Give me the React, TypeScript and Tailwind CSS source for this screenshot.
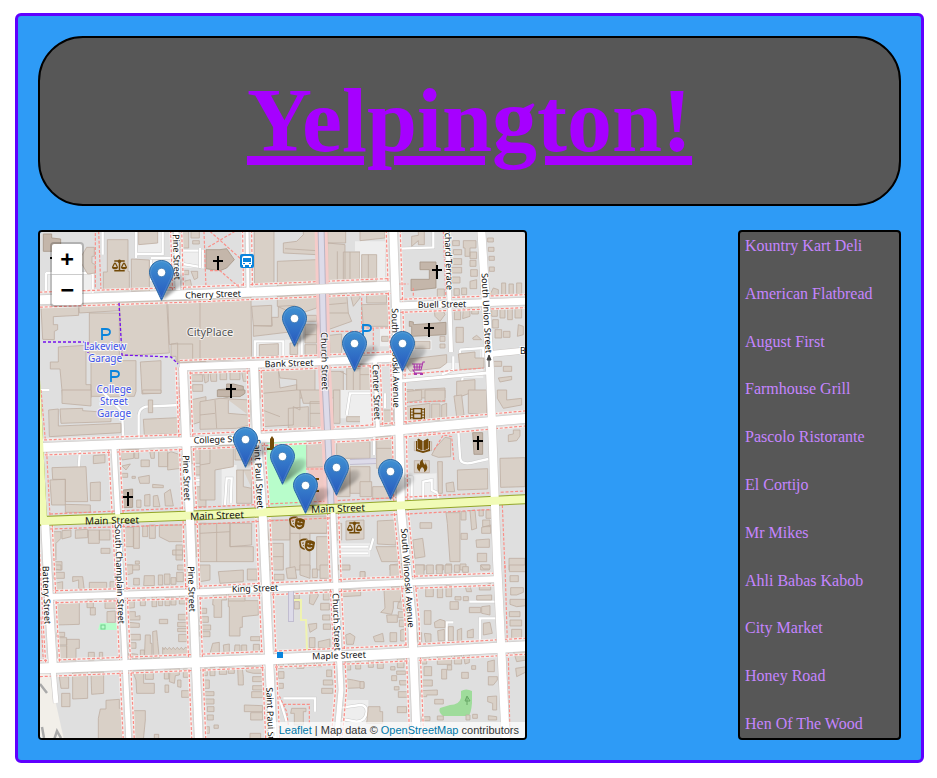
import type { ReactNode } from "react";
import { FaBalanceScale, FaFilm, FaTheaterMasks } from "react-icons/fa";

const restaurants = [
  "Kountry Kart Deli",
  "American Flatbread",
  "August First",
  "Farmhouse Grill",
  "Pascolo Ristorante",
  "El Cortijo",
  "Mr Mikes",
  "Ahli Babas Kabob",
  "City Market",
  "Honey Road",
  "Hen Of The Wood",
];

// Tip of each pin, in map units.
const pins: [number, number][] = [
  [161, 300],
  [294, 346],
  [354, 371],
  [402, 371],
  [245, 467],
  [282, 484],
  [336, 495],
  [390, 499],
  [305, 513],
];

type Point = [number, number];
interface Street {
  points: Point[];
  width: number;
  walk?: boolean;
}

const streets: Street[] = [
  { points: [[30, 300], [206, 294], [390, 286]], width: 9, walk: true },
  { points: [[180, 367], [290, 363], [398, 358]], width: 7, walk: true },
  { points: [[395, 306], [530, 301]], width: 7, walk: true },
  { points: [[490, 354], [530, 350]], width: 6 },
  { points: [[400, 381], [487, 373]], width: 3 },
  { points: [[30, 448], [206, 441], [365, 433], [530, 418]], width: 9, walk: true },
  { points: [[46, 597], [206, 592], [370, 584], [500, 579]], width: 6, walk: true },
  { points: [[30, 669], [206, 662], [370, 655], [530, 646]], width: 10, walk: true },
  { points: [[45, 520], [50, 620], [53, 668]], width: 8, walk: true },
  { points: [[53, 668], [56, 703]], width: 5 },
  { points: [[114, 448], [118, 520], [124, 640], [129, 745]], width: 5, walk: true },
  { points: [[176, 225], [178, 290]], width: 5, walk: true },
  { points: [[183, 367], [186, 440], [190, 520], [199, 745]], width: 8, walk: true },
  { points: [[247, 225], [248, 290]], width: 3, walk: true },
  { points: [[254, 366], [257, 440], [263, 520], [273, 745]], width: 8, walk: true },
  { points: [[333, 512], [336, 590], [341, 690], [336, 745]], width: 5, walk: true },
  { points: [[375, 360], [378, 432]], width: 4, walk: true },
  { points: [[393, 225], [398, 370], [401, 510], [412, 620], [417, 745]], width: 8, walk: true },
  { points: [[447, 225], [451, 352]], width: 4 },
  { points: [[481, 225], [490, 370], [497, 560], [506, 745]], width: 8 },
];

function toPath(points: Point[]) {
  return "M" + points.map((p) => p.join(" ")).join("L");
}

// Shifts a polyline sideways, for the pavements on both sides of a street.
function offset(points: Point[], distance: number): Point[] {
  return points.map((p, i) => {
    const a = points[Math.max(0, i - 1)];
    const b = points[Math.min(points.length - 1, i + 1)];
    const length = Math.hypot(b[0] - a[0], b[1] - a[1]);
    return [p[0] - ((b[1] - a[1]) / length) * distance, p[1] + ((b[0] - a[0]) / length) * distance];
  });
}

interface Block {
  x: number;
  y: number;
  houses: string;
  landmarks?: string;
  lots?: string;
  lanes?: string;
  walks?: string;
}

// City blocks; the coordinates inside a block are thirds of a map unit.
const blocks: Block[] = [
  {
    x: 36,
    y: 228,
    lots: "M25 135H170V195H25ZM305 10H380V75H305ZM345 90H410V160H345ZM438 68H500V120H438Z",
    lanes: "M30 135V190M30 135H170V195M200 10V80M300 10V90M300 78H380V10M345 95V160M345 90H410M438 68H500V118L440 108Z",
    landmarks: "M22 18H47V30L74 33V70H22Z",
    houses:
      "M214 35H276V130H280V188H202V132H214ZM286 93L340 96V190H286ZM152 58H175V85H168V105L178 110V135L155 138L130 95ZM308 10H365V45L308 50ZM435 10H458V60H435ZM465 10H490V30H465ZM470 38H490V48H470ZM443 127H458V140H443ZM465 130H485V150L475 155ZM443 160L463 155L468 180H443ZM15 235L127 232L128 262L52 266V290H65V305L55 310V335L20 334ZM128 225L250 220V248L130 255ZM160 255H250V395H160ZM250 222L392 217L400 375L258 383ZM395 217H510V400L425 405V345L400 350ZM405 348H470V400H420V385H405ZM67 357L150 352V470H165V510H80L72 423H43V402H67ZM165 398H300V490L295 505H165ZM313 402L375 398V495L318 498ZM465 440H500V460H465ZM470 470H500V490H470Z",
    walks: "M188 10L195 190M178 15V180M430 420V510",
  },
  {
    x: 200,
    y: 228,
    lots: "M163 335H310V392H163ZM465 40H510V70H465Z",
    lanes: "M165 390V340H250V385M305 310V385M0 60V120",
    landmarks: "M18 65L60 65L80 62L103 95L80 120L60 128L18 122ZM55 485L80 483V468H100L130 475V500L80 508L55 503Z",
    houses:
      "M163 10H222V168H163V85ZM232 100L350 95V170L232 175ZM250 45L290 40L310 20V10H350V80L250 75ZM255 62L350 68M383 10H437V45H383ZM383 45L435 50V160H383ZM430 72H480V158H430ZM450 72V158M485 70H510V150H485ZM412 70V155M0 212L153 207L155 392L0 400ZM155 235L215 232V295L160 293ZM215 268H235V235L285 232V310L160 325V293H217ZM232 205L350 198V240L290 260L232 235ZM310 262H350V280H310ZM315 290H350V345H315ZM315 320H350M315 350H350V380H315ZM178 350L235 347V382L178 387ZM270 345H293V380H270ZM383 200L440 195L445 255L455 280L385 305ZM383 230L440 225M385 255H445M450 195L480 193V210L460 235ZM388 322L425 318V375L390 380ZM10 430H25V460L15 465ZM30 435H50V460H33ZM60 432H80V455H60ZM90 430H120V455H90ZM125 430H145V460H130ZM180 430L235 425L240 480L290 470V510H180ZM235 425L345 420V510H290V455L240 450ZM390 430H430V510H390ZM440 420H510V510H440ZM420 430L440 440M460 430V500",
    walks: "M30 10L125 95M105 10L20 60M30 128H60L120 180M485 195V310M380 310H485M12 10L18 180",
  },
  {
    x: 360,
    y: 228,
    lots: "M0 40H75V165H0ZM60 300H90V355H60ZM155 335H215V365H155ZM130 405H370V450H130ZM360 355H375V395H360Z",
    lanes: "M120 62L220 58V10M300 365L370 360V400M300 365V375M245 440L280 425V385M300 490L308 450",
    landmarks: "M180 102H228V180L153 188V154H208V125H180ZM148 280L160 282V290L258 283V320L155 325V295H148Z",
    houses:
      "M0 10H75V30L0 38ZM5 80H50V160H5ZM25 80V160M155 25L175 22V10H193V50H175V38L155 55ZM278 38H298V53H278ZM280 65H305V80H280ZM277 92H305V110H275ZM275 118H305V135H275ZM275 147H300V165H275ZM282 182H298V202H282ZM305 180H320V200H305ZM232 183H253V210H232ZM310 38H348V60H330V85H315V60H310ZM330 72H350V92H330ZM330 97H348V115H330ZM332 125H352V145H332ZM330 160L350 155V182H330ZM383 30H400V42H383ZM385 58H402V70H385ZM387 85H403V97H387ZM388 117H403V130H388ZM390 200L400 180L415 185V200ZM425 165H437V200H425ZM447 168H460V200H447ZM470 165H485V198H470ZM20 195H80V225H20ZM5 230L85 228V295H10ZM223 250L250 248L255 260L240 280L225 265ZM283 250H302V275H283ZM310 240L330 235V265L308 272ZM335 235H355V258H335ZM288 298H310V343H288ZM338 330L350 322L365 335H340ZM395 245H412V265H395ZM420 240H435V270H420ZM443 240H457V275H443ZM465 242H485V270H465ZM398 275H415V300H398ZM405 305H425V330H405ZM430 310H450V328H430ZM475 290L490 295V320L472 325ZM165 340H210V362H165ZM65 325H85V340H65ZM240 325H255V340H240ZM240 348H255V360H240ZM130 395L260 380V405L240 420L150 430ZM295 378L345 372V390H372V420L300 425ZM165 485L255 480V510H165ZM290 460L345 455V490L290 510ZM388 400H425V415H388ZM388 430H400V440H388ZM415 450L455 445V455L420 462ZM430 415H455V430H430ZM0 410H35V510H0ZM0 440H35M135 485H160V510H135Z",
    walks: "M115 168H145M160 180V210M5 300H85M40 300V370M130 440L370 420M250 10L258 210",
  },
  {
    x: 36,
    y: 390,
    lots: "M455 260H510V290H455Z",
    lanes: "M258 60L262 150M308 145V75Q310 55 330 50L435 45M132 180L128 235M10 0H40M475 270H510M195 0L258 65",
    landmarks: "M262 300L290 297V352L262 353Z",
    houses:
      "M78 0H165V48L78 40ZM72 57L140 55V62L225 68V95L75 100ZM38 60L67 57V108L255 100V128L40 140ZM322 88L425 83V130L325 135ZM320 0H375V10H320ZM337 30H350V68H337ZM172 197L207 194V218L172 221ZM48 233L150 230L155 335H88V268H50ZM42 270L88 268V345H47ZM88 343L163 345V367H88ZM163 278L193 276V332H163ZM250 180L293 178V205L258 210ZM296 178H308V205H296ZM340 178H355V205H345ZM368 178H395V230H368ZM405 185L435 195V235L395 240V190ZM315 210H340V230H315ZM258 228L283 222L270 240ZM258 250H275V262H258ZM288 259H298V265H288ZM307 262L340 256V280H312ZM350 283L382 286V293H350ZM302 330H315V352H302ZM326 315L342 313V348H326ZM352 318L365 316L372 350H352ZM385 310L403 298L412 348H388ZM52 425H75V445L60 460V510H52ZM78 422L105 420V440L78 447ZM118 420L155 418V443L118 445ZM157 420H190V460H157ZM190 420H222V450H190ZM195 475H222V490H195ZM52 515H78V540H52ZM262 412H292V470H262ZM293 410H310V475H293ZM320 408H335V440H320ZM340 405H358V445H340ZM370 405H445V455H400L370 440ZM420 465H440V510H420ZM410 480H440V495H410ZM298 513H310V522H298ZM270 525H310V540H270ZM462 30L510 20V90L465 105ZM465 170H510V220H465ZM475 230H505V255H475ZM478 290H510V350H478ZM480 400H510V500H480Z",
    walks: "M32 185L42 380M430 0V135M15 0L28 150",
  },
  {
    x: 200,
    y: 390,
    lots: "M65 225H110V345H65ZM415 0H510V85H415ZM410 460H510V500H410Z",
    lanes: "M75 345L80 265H95L92 340M415 470H505M415 490H505M440 75L450 10H510",
    landmarks: "M52 0H135V10L120 20H52Z",
    houses:
      "M438 393L492 390V447L438 450ZM0 35L60 25L150 30V105L110 115L0 118ZM45 30L50 115M0 75L45 70M85 30V70L145 75M187 10L290 0H300V60L280 50V105L187 110ZM187 60L240 80M265 55L325 50V115H265ZM300 0H365V40H310ZM330 35H365V110H330ZM330 70H365M400 0H420V100H400ZM440 80H510V95H440ZM0 170L100 165V230L45 240V330H0ZM30 170V220L0 225M105 175H150V210H105ZM110 240H155V340H110ZM130 240V290L155 295M320 155L375 150V230L320 232ZM410 155H510V205H410ZM410 235H450V320H405ZM450 230H510V310H450ZM0 400H90V470H160V515H0ZM0 430L90 425M50 400V515M90 400H155V465L90 470ZM210 390H270V450H205ZM270 380L380 378V430H330V540H270ZM270 430H380M300 430V540M205 460H250V540H205ZM205 500H250M350 440H385V540H350ZM400 400H425V450H400Z",
    walks: "M318 237H370",
  },
  {
    x: 360,
    y: 390,
    lots: "M140 255L230 250V325H140ZM0 20H40V105H0Z",
    lanes: "M155 330V262L135 260M190 325V275L215 270V300L235 310V325M295 125L300 200Q300 230 350 215L385 207M42 135V195M75 10V55M40 445L30 480",
    landmarks: "M338 128H368V193H342Z",
    houses:
      "M135 5L185 0V30L135 38ZM195 0H255V35H195ZM135 50L210 40V85L140 100ZM215 42H240V90H215ZM245 45L260 40V85H245ZM282 18L305 15L312 75L290 80ZM325 0H380V75L325 70ZM412 0H440V30L485 25V45L430 55L412 25ZM65 60H100V105H65ZM50 140L95 137V230L50 235ZM50 175H95M0 275H35V320H0ZM38 290H95V325H38ZM163 155H215V182H163ZM163 212H208V248H163ZM225 175L255 142L272 145V200L235 202L215 195ZM445 135L460 132V120H480V138L470 152L445 155ZM233 215H247V310H235ZM292 240L383 236V297L293 300ZM258 280L280 276L284 305H260ZM420 205L495 203V290L422 292ZM52 393L108 390V465L52 462ZM48 470H113V515H65ZM158 450L188 445L195 500L165 505ZM180 398H215V415H180ZM258 368H300V515H270L262 400ZM303 365H318V390H303ZM330 362L345 360L350 415L335 420ZM357 360H370V378H357ZM378 360H395V385H378ZM368 390H390V410H368ZM365 412L392 405V430H365ZM348 450L388 447V472H350ZM303 430H322V448H303ZM352 490H380V515H352ZM447 505H495V540H447ZM90 525L130 520V540H90ZM165 525H195V540H165ZM228 525H250V540H228ZM258 522H275V540H258ZM300 522H318V540H300ZM362 525H388V540H362Z",
    walks: "M385 0V70M222 180L250 135L275 140L282 215M135 130L245 128M427 345L435 540M135 38L255 32",
  },
  {
    x: 36,
    y: 565,
    houses:
      "M52 0H75V15L55 12ZM52 22H85V40H52ZM55 55L80 50V75H55ZM110 35H140L145 75L128 70V45L110 50ZM160 52H212V72H160ZM222 50H240V70H222ZM60 115L130 110V178L62 180ZM153 105H172V128H153ZM163 128H178V150H163ZM207 103H240V130H207ZM213 140L238 138V172H213ZM62 202H86V215H62ZM66 218H92V240H66ZM92 223H130V250H120V287H92ZM66 243H92V287H66ZM157 262H175V285H157ZM190 262H200V283H190ZM270 0H290V25L272 30ZM293 40H310V60H293ZM325 32H355V62H323ZM367 30H380V60H367ZM385 27H402V58H385ZM405 38H420V58H405ZM422 22H442V50H422ZM425 0H447V15H425ZM275 105L295 108V128L275 130ZM313 100L328 98V122H313ZM348 95H362V125H348ZM368 100H380V122H368ZM387 97H402V122H387ZM405 97H420V120H405ZM430 92H455V117H430ZM280 140H298V155L312 152V165H280ZM278 172L310 175V187H278ZM370 163H395V176H370ZM427 148H455V165H427ZM425 172H455V185H425ZM425 190H455V200H425ZM428 208H452V230H428ZM280 208H313V225H280ZM277 233H300V250H277ZM277 265L305 268V280H277ZM328 210H343V235H348V280H325ZM313 255H325V280H313ZM350 200L362 197L365 230L370 280H352ZM380 247L384 254L388 247L394 254L400 247L406 254L412 247L418 254L424 247L430 254L436 247L442 254L448 247L458 250V270L380 275ZM110 323L155 320V400L110 402ZM165 322L203 321V385L167 388ZM70 335H98V370H75ZM77 385H102V425H77ZM210 406L250 403V430L258 432V525H187V460L193 432H210ZM290 318L323 316V355H355V385H302L300 345ZM328 316H352V343H328ZM385 315H398V342H385ZM402 310H430V330L418 332L415 355L400 350ZM425 345H435V367L425 365ZM442 312H458V337H442ZM387 360H398V382H387ZM437 377H460V397H437ZM292 437H328V465L322 525H292ZM355 508H368V525H355Z",
    walks: "M15 155L22 290M472 320L478 520",
  },
  {
    x: 200,
    y: 565,
    lots: "M440 405H505V470H425Z",
    lanes: "M240 405L260 470M250 400H345V440M425 428L480 420Q500 420 500 440Q498 468 470 470L425 462",
    houses:
      "M0 0H30V45L0 50ZM55 20L130 15V50L60 55ZM142 12H172V45H142ZM40 90L80 85V105H65V157H42V120H38ZM85 78H135V107H175V150L127 155V187H120V213H88V125H85ZM85 108H135M0 130H20V145H0ZM0 155H25V172H0ZM0 180H32V195H0ZM0 200H30V215H0ZM38 235L58 232V265H30ZM70 240L88 237V265H72ZM105 240H120V262H103ZM125 240H140V262H125ZM152 215H180V227H152ZM160 238H178V262H160ZM222 28H252V45H222ZM258 10L285 5L290 40H262ZM300 0H330V40L300 30ZM337 12H352V38H337ZM360 0H388V40H360ZM415 0H450V15H415ZM483 20H495V40H483ZM283 82H298V102H283ZM283 110H298V132H283ZM330 80L350 75L355 92L340 120L328 115ZM370 75H388V105H370ZM362 115H388V135H362ZM325 178L350 175V190L330 202ZM328 218H345V248H328ZM355 230L390 222V248H355ZM368 150H390V165H368ZM370 177H392V193H370ZM425 75L482 72V92L425 95ZM437 210L450 205L465 215L460 238H440ZM10 310H22V332H10ZM30 308H45V332H30ZM58 308H80V328H58ZM85 308H103V325H85ZM113 310H127L130 335V360H115ZM135 305H188V325H160L140 320ZM158 335H188V350H158ZM158 362H188V375H158ZM155 380H188V398H155ZM133 420L188 422V440H133ZM152 443H188V465H152ZM150 505H182V525H150ZM12 345H28V370H12ZM12 380H42V392H12ZM12 402H42V417H12ZM22 425H42V440H22ZM22 450H40V465H22ZM42 480H55V490H42ZM15 485H28V505H15ZM235 295H250V310H235ZM235 320H252V340H235ZM235 355H250V370H235ZM265 290H280V308H265ZM290 292H312V310H290ZM320 290L343 288V305H320ZM350 288H365V305H350ZM380 315H395V335H380ZM370 345H398V360H370ZM365 370H398V385H365ZM275 430H318V440H310V480H283V445H272ZM433 290H452V315H433ZM467 288H482V312H467ZM440 342L460 345L492 352V368L440 370Z",
    walks: "M250 418H328V475M232 380L260 440L265 480",
  },
  {
    x: 360,
    y: 565,
    lanes: "M260 230V172H280M360 225V160H410M328 110H410",
    houses:
      "M90 0H130V38H90ZM165 0H192V35H165ZM200 0H220V27H200ZM230 0H247V27H230ZM255 0H275V25H255ZM283 0H298V22H283ZM308 5H325V22H308ZM362 0H390V12H370ZM448 0H500V20H448ZM0 20H15V38H0ZM72 75H95V65H130L120 110H100V130L95 148L62 142L75 130ZM80 150H112V172H82ZM115 112L135 108V135L112 130ZM115 140H138V158H115ZM118 165H137V185H118ZM197 68H220V95H197ZM232 65H248V98H232ZM258 62H275V95H258ZM315 62H330L335 80H320ZM358 65L392 55V75H358ZM285 95H303V105H285ZM310 95H325V107H310ZM350 92L395 90V105H350ZM270 110H295V133H270ZM328 127H362V143H328ZM365 125L390 122V150L365 145ZM193 137H213V178H193ZM223 172L240 163L255 168V188H225ZM233 197L253 193V228H235ZM265 185H280V228H265ZM292 195L305 190V228H292ZM322 198L340 192V218H322ZM370 175L390 172L397 205L370 210ZM193 205L213 207V232H197ZM173 203H185V230H173ZM122 195L135 192V228H122ZM90 203H110V230H90ZM40 215L68 205L72 230H45ZM450 32H475V50H450ZM452 68H490V82L470 90H452ZM450 103H500V122L470 125L450 118ZM448 140H480V155H448ZM450 165H485V183H450ZM455 193H485V220H455ZM460 258H500V285L470 290ZM467 310L500 305V320L470 335ZM180 272L215 270L200 290V297H180ZM232 272L275 270V298H232ZM283 270H305V297H283ZM310 268L328 265V293L315 297ZM262 300H275V315H262ZM335 302H347V313H335ZM192 305H215V332H192ZM245 313H260V342H245ZM305 322H325V340H305ZM183 345H217V363H183ZM182 377L232 375V390H200V395H182ZM224 403H250V417H224ZM383 290L403 285V320H383ZM385 335H412V345L400 360H385ZM383 395L410 393V435H398V415L383 410ZM385 452L410 455V465H385ZM185 455H210V467H185ZM318 450H330V465H318ZM338 448H352V460H338ZM232 453H250V465H232ZM25 280H40V307H25ZM52 287H70V310H52ZM112 280L132 277V308H112ZM92 305H105V315H92ZM95 332H110V347H95ZM110 318H137V328H110ZM118 347H142V360H120ZM103 365H117V375H103ZM115 380H142V397H115ZM112 425H140V443H112ZM0 350H12V370H0ZM25 425H60V440H68V475H20Z",
    walks: "M435 0L442 230M445 265L450 520",
  },
];

interface LabelProps {
  x: number;
  y: number;
  angle?: number;
  major?: boolean;
  children: ReactNode;
}

function StreetLabel({ x, y, angle = 0, major = false, children }: LabelProps) {
  return (
    <text
      x={x}
      y={y}
      transform={`rotate(${angle} ${x} ${y})`}
      textAnchor="middle"
      dominantBaseline="central"
      paintOrder="stroke"
      className={major ? "fill-[#111111] text-[10px]" : "fill-[#111111] stroke-white/80 stroke-2 text-[9px]"}
    >
      {children}
    </text>
  );
}

function Church({ x, y }: { x: number; y: number }) {
  return <path d={`M${x} ${y - 7}V${y + 7}M${x - 5} ${y - 2}H${x + 5}`} stroke="#000" strokeWidth="2" />;
}

function Parking({ x, y }: { x: number; y: number }) {
  return <path d={`M${x} ${y + 12}V${y + 1}H${x + 4}Q${x + 8} ${y + 1} ${x + 8} ${y + 4}Q${x + 8} ${y + 7} ${x + 4} ${y + 7}H${x}`} fill="none" stroke="#0a84dc" strokeWidth="1.8" />;
}

function CityMap() {
  return (
    <svg
      viewBox="40 232 485 506"
      preserveAspectRatio="xMidYMid slice"
      className="block h-full w-full font-['Noto_Sans',sans-serif]"
      role="img"
      aria-label="Street map of downtown Burlington"
    >
      <rect x="40" y="232" width="485" height="506" fill="#dfdfdf" />
      <path d="M40 672H49L64 740H40Z" fill="#f2efe9" />
      <path d="M40 684L47 693M42 727L44 738M54 740L57 731L61 738" stroke="#aaa" strokeWidth="2.5" fill="none" />
      <path d="M267 441L306 440V504L267 506Z" fill="#b8fdcb" />
      <path d="M100 623H117V630H98Z" fill="#b8fdcb" />
      <rect x="101" y="625" width="4" height="4" fill="none" stroke="#6fce8b" />
      <path d="M307 467H332V504L318 505Z" fill="#f0c9c4" />
      <path d="M461 691Q466 688 472 691V703Q471 715 468 716H443Q438 712 440 708L450 705Q459 705 461 698Z" fill="#9fdc9b" />
      {blocks.map((block) => (
        <g key={`${block.x}-${block.y}`} transform={`translate(${block.x} ${block.y}) scale(0.33333)`}>
          {block.lots && <path d={block.lots} fill="#eeeeee" />}
          {block.lanes && (
            <>
              <path d={block.lanes} fill="none" stroke="#cccccc" strokeWidth="10" />
              <path d={block.lanes} fill="none" stroke="#fff" strokeWidth="7" />
            </>
          )}
          <path d={block.houses} fill="#d9d0c7" stroke="#bfb0a3" strokeWidth="2.5" />
          {block.landmarks && <path d={block.landmarks} fill="#c4b6aa" stroke="#a79788" strokeWidth="2.5" />}
          {block.walks && <path d={block.walks} fill="none" stroke="#fa8f88" strokeWidth="3.5" strokeDasharray="9 5" />}
        </g>
      ))}
      <path d="M467 705V697M467 696L465 701H470Z" fill="none" stroke="#68a866" />

      {/* Pavements */}
      <g fill="none" stroke="#f5f1ef" strokeWidth="2.5">
        {streets
          .filter((street) => street.walk)
          .map((street, i) => (
            <path key={i} d={[-1, 1].map((side) => toPath(offset(street.points, side * (street.width / 2 + 3)))).join("")} />
          ))}
      </g>
      <g fill="none" stroke="#fa8a84" strokeWidth="1.2" strokeDasharray="3 1.8">
        {streets
          .filter((street) => street.walk)
          .map((street, i) => (
            <path key={i} d={[-1, 1].map((side) => toPath(offset(street.points, side * (street.width / 2 + 3)))).join("")} />
          ))}
        <path d="M50 514L206 507L370 499L525 491M50 529L206 524L370 516L500 509" />
      </g>
      <path d="M43 342H88V353M119 303L122 355L171 357L178 364" fill="none" stroke="#7510ee" strokeWidth="1.3" strokeDasharray="3 2" />

      {/* Pedestrian mall */}
      <path d="M321 225L324 360L328 440L331 504" fill="none" stroke="#f5cbc9" strokeWidth="13" />
      <path d="M321 225L324 360L328 440L331 504" fill="none" stroke="#b9b5c4" strokeWidth="7" />
      <path d="M321 225L324 360L328 440L331 504" fill="none" stroke="#dddbe9" strokeWidth="5" />
      <path d="M350 462L376 461M291 589V622" fill="none" stroke="#c1bdd0" strokeWidth="6" />
      <path d="M350 462L376 461M291 589V621" fill="none" stroke="#dddbe9" strokeWidth="4" />
      <path d="M294 600H301V620H306L307 650" fill="none" stroke="#eff3b0" strokeWidth="2" />

      {/* Roadways */}
      <g fill="none" strokeLinejoin="round">
        {streets.map((street, i) => (
          <path key={i} d={toPath(street.points)} stroke="#c9c5c3" strokeWidth={street.width + 1} />
        ))}
        <path d="M36 380L43 521" stroke="#8ca51f" strokeWidth="8" />
        <path d="M40 521L206 515L370 507L530 499" stroke="#93a62a" strokeWidth="10" />
        {streets.map((street, i) => (
          <path key={i} d={toPath(street.points)} stroke="#fff" strokeWidth={street.width} />
        ))}
        <path d="M36 380L43 521L206 515L370 507L530 499" stroke="#f1fbb6" strokeWidth="8" />
      </g>

      <StreetLabel x={213} y={294} angle={-2}>Cherry Street</StreetLabel>
      <StreetLabel x={289} y={363} angle={-2}>Bank Street</StreetLabel>
      <StreetLabel x={442} y={304} angle={-1}>Buell Street</StreetLabel>
      <StreetLabel x={223} y={439} angle={-2}>College Street</StreetLabel>
      <StreetLabel x={112} y={520} angle={-1} major>Main Street</StreetLabel>
      <StreetLabel x={217} y={515} angle={-2} major>Main Street</StreetLabel>
      <StreetLabel x={338} y={508} angle={-2} major>Main Street</StreetLabel>
      <StreetLabel x={255} y={588} angle={-2}>King Street</StreetLabel>
      <StreetLabel x={339} y={655} angle={-2}>Maple Street</StreetLabel>
      <StreetLabel x={523} y={350}>B</StreetLabel>
      <StreetLabel x={177} y={257} angle={88}>Pine Street</StreetLabel>
      <StreetLabel x={187} y={478} angle={88}>Pine Street</StreetLabel>
      <StreetLabel x={192} y={589} angle={88}>Pine Street</StreetLabel>
      <StreetLabel x={47} y={595} angle={88}>Battery Street</StreetLabel>
      <StreetLabel x={120} y={574} angle={88}>South Champlain Street</StreetLabel>
      <StreetLabel x={259} y={474} angle={87}>Saint Paul Street</StreetLabel>
      <StreetLabel x={271} y={722} angle={88}>Saint Paul Street</StreetLabel>
      <StreetLabel x={325} y={361} angle={89}>Church Street</StreetLabel>
      <StreetLabel x={337} y={622} angle={88}>Church Street</StreetLabel>
      <StreetLabel x={377} y={392} angle={88}>Center Street</StreetLabel>
      <StreetLabel x={396} y={358} angle={89}>South Winooski Avenue</StreetLabel>
      <StreetLabel x={408} y={578} angle={86}>South Winooski Avenue</StreetLabel>
      <StreetLabel x={449} y={256} angle={88}>Orchard Terrace</StreetLabel>
      <StreetLabel x={487} y={313} angle={87}>South Union Street</StreetLabel>
      <path d="M489 367V357M487 360L489 355L491 360Z" stroke="#444" fill="#444" />

      <text x="210" y="336" textAnchor="middle" paintOrder="stroke" className="fill-[#555555] stroke-white/70 stroke-2 text-[11px]">
        CityPlace
      </text>
      <g textAnchor="middle" paintOrder="stroke" className="fill-[#3d52e8] stroke-white/80 stroke-2 text-[10px]">
        <text x="105" y="350">Lakeview</text>
        <text x="105" y="362">Garage</text>
        <text x="114" y="393">College</text>
        <text x="114" y="405">Street</text>
        <text x="114" y="417">Garage</text>
      </g>

      <Parking x={102} y={328} />
      <Parking x={111} y={370} />
      <Parking x={363} y={324} />
      <path d="M50 258H54" stroke="#000" strokeWidth="2" />
      <Church x={218} y={263} />
      <Church x={231} y={391} />
      <Church x={437} y={272} />
      <Church x={429} y={330} />
      <Church x={128} y={499} />
      <Church x={478} y={443} />

      <g color="#734a08">
        <FaBalanceScale x={112} y={258} size={15} />
        <FaBalanceScale x={347} y={520} size={15} />
        <FaFilm x={410} y={406} size={15} />
        <FaTheaterMasks x={289} y={515} size={16} />
        <FaTheaterMasks x={299} y={537} size={16} />
      </g>
      <g fill="#734a08">
        {/* Library, fire station, monument */}
        <path d="M416 441V451L423 453L430 451V441H429V449L424 451H422L417 449V441Z" />
        <path d="M418 439L422 441V450L418 448ZM428 439L424 441V450L428 448Z" stroke="#734a08" />
        <path d="M420 472Q415 468 418 463Q419 465 420 465Q419 461 423 459Q422 462 425 465Q426 464 425 462Q429 467 426 471L424 472Q425 469 422 467Q419 470 420 472Z" />
        <path d="M267 450H277V448H274V439L272 436L270 439V448H267Z" />
        <path d="M314 478H319V480H317V490H319V492H314V490H315V480H314Z" />
      </g>
      {/* Supermarket */}
      <path d="M425 362H423L421 370H413L415 373H422M412 364H422M413 367H422M414 364L415 370M417 364V370M420 364L419 370" fill="none" stroke="#ac39ac" strokeWidth="1.1" />
      <path d="M414 373H417V375H414ZM420 373H423V375H420Z" fill="#ac39ac" />

      {/* Bus station */}
      <rect x="240" y="254" width="14" height="14" rx="2" fill="#0a84dc" />
      <path d="M242 258Q242 256 244 256H250Q252 256 252 258V265H251V267H249V265H245V267H243V265H242Z" fill="#fff" />
      <path d="M243 258H251V262H243ZM243 263H245V264H243ZM249 263H251V264H249Z" fill="#0a84dc" />
      <rect x="277" y="652" width="6" height="6" fill="#0a84dc" />
    </svg>
  );
}

function Pin() {
  return (
    <svg width="41" height="41" viewBox="0 0 41 41" className="block" aria-hidden="true">
      <defs>
        <linearGradient id="pin-body" x1="0" y1="0" x2="0" y2="1">
          <stop offset="0" stopColor="#3f91d2" />
          <stop offset="1" stopColor="#2657bd" />
        </linearGradient>
        <linearGradient id="pin-shadow" x1="0" y1="1" x2="1" y2="0">
          <stop offset="0" stopColor="#000" stopOpacity="0.5" />
          <stop offset="1" stopColor="#000" stopOpacity="0.1" />
        </linearGradient>
        <filter id="pin-soft">
          <feGaussianBlur stdDeviation="1.4" />
        </filter>
      </defs>
      <path d="M13 40L18 24Q24 13 34 15Q39 19 32 26Z" fill="url(#pin-shadow)" filter="url(#pin-soft)" />
      <path
        d="M12.5 0.5C5.8 0.5 0.5 5.9 0.5 12.4C0.5 15.2 1.8 18 3.3 20.8L12.5 40.3L21.7 20.8C23.2 18 24.5 15.2 24.5 12.4C24.5 5.9 19.2 0.5 12.5 0.5Z"
        fill="url(#pin-body)"
        stroke="#2e6ca5"
      />
      <path
        d="M12.5 1.6C6.4 1.6 1.6 6.5 1.6 12.4C1.6 15 2.8 17.7 4.3 20.3L12.5 37.8L20.7 20.3C22.2 17.7 23.4 15 23.4 12.4C23.4 6.5 18.6 1.6 12.5 1.6Z"
        fill="none"
        stroke="#fff"
        strokeOpacity="0.12"
      />
      <circle cx="12.5" cy="12.5" r="4.2" fill="#fff" stroke="#2e6ca5" strokeWidth="0.7" />
    </svg>
  );
}

export default function App() {
  return (
    <div className="mt-[13px] mr-[13px] ml-[15px] rounded-md border-3 border-[#5f00ff] bg-[#2e9bf6] p-5 font-['Liberation_Serif',serif]">
      <header className="flex h-[170px] items-center justify-center rounded-[45px] border-2 border-black bg-[#575757]">
        <h1 className="text-[90px] leading-[104px] font-bold text-[#a600ff] underline">Yelpington!</h1>
      </header>

      <main className="mt-6 flex items-stretch justify-between">
        <section className="relative h-[510px] w-[489px] overflow-hidden rounded-sm border-2 border-black" aria-label="Map">
          <CityMap />
          {pins.map(([x, y]) => (
            <button
              key={`${x}-${y}`}
              type="button"
              aria-label="Restaurant marker"
              className="absolute h-[41px] w-[41px]"
              style={{ left: x - 52, top: y - 272 }}
            >
              <Pin />
            </button>
          ))}
          <div className="absolute top-2.5 left-2.5 flex w-[34px] flex-col overflow-hidden rounded-sm border-2 border-black/20 bg-white bg-clip-padding font-['DejaVu_Sans_Mono',monospace] text-[22px] leading-[30px] font-bold text-black">
            <button type="button" aria-label="Zoom in" className="h-[31px] border-b border-[#cccccc]">
              +
            </button>
            <button type="button" aria-label="Zoom out" className="h-[30px]">
              −
            </button>
          </div>
          <p className="absolute right-0 bottom-0 bg-white/70 px-1.5 font-['Liberation_Sans',sans-serif] text-[11px] leading-4 text-[#333333]">
            <a href="#leaflet" className="text-[#0078a8]">Leaflet</a> | Map data © <a href="#osm" className="text-[#0078a8]">OpenStreetMap</a> contributors
          </p>
        </section>

        <nav className="flex w-[163px] flex-col justify-between rounded-sm border-2 border-black bg-[#575757] p-[5px] text-base leading-[18px] text-[#c585ff]">
          {restaurants.map((name) => (
            <a key={name} href={`#${name.toLowerCase().replaceAll(" ", "-")}`}>
              {name}
            </a>
          ))}
        </nav>
      </main>
    </div>
  );
}
